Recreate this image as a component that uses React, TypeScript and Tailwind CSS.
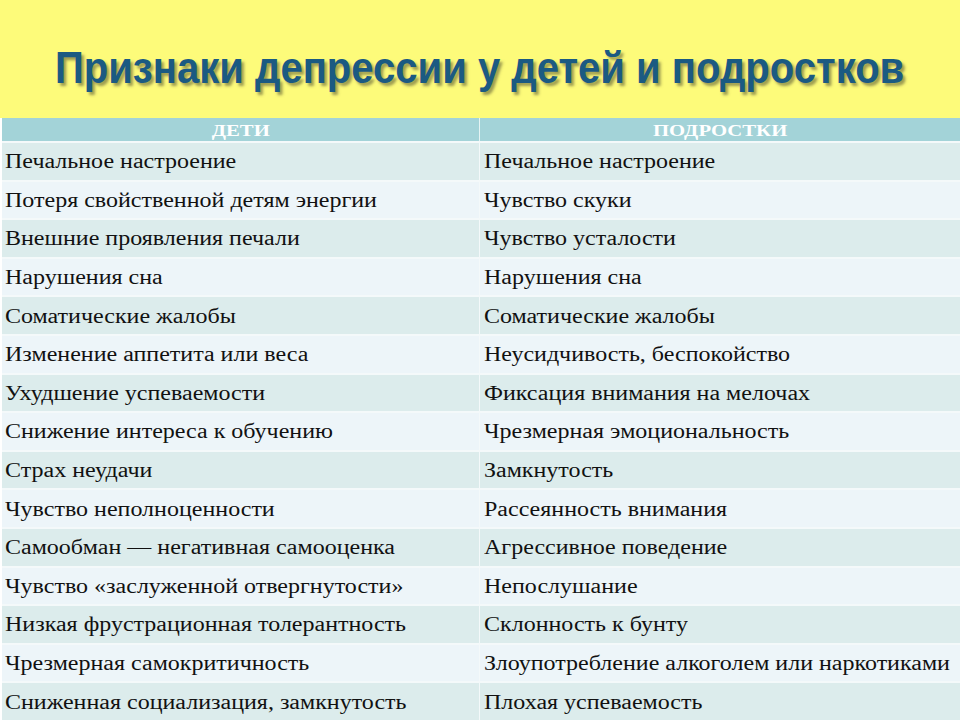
import React from "react";

const rows: [string, string][] = [
  ["Печальное настроение", "Печальное настроение"],
  ["Потеря свойственной детям энергии", "Чувство скуки"],
  ["Внешние проявления печали", "Чувство усталости"],
  ["Нарушения сна", "Нарушения сна"],
  ["Соматические жалобы", "Соматические жалобы"],
  ["Изменение аппетита или веса", "Неусидчивость, беспокойство"],
  ["Ухудшение успеваемости", "Фиксация внимания на мелочах"],
  ["Снижение интереса к обучению", "Чрезмерная эмоциональность"],
  ["Страх неудачи", "Замкнутость"],
  ["Чувство неполноценности", "Рассеянность внимания"],
  ["Самообман — негативная самооценка", "Агрессивное поведение"],
  ["Чувство «заслуженной отвергнутости»", "Непослушание"],
  ["Низкая фрустрационная толерантность", "Склонность к бунту"],
  ["Чрезмерная самокритичность", "Злоупотребление алкоголем или наркотиками"],
  ["Сниженная социализация, замкнутость", "Плохая успеваемость"],
];

export default function App() {
  return (
    <div className="w-[960px] h-[720px] overflow-hidden bg-[#fdfb7a] flex flex-col">
      <div className="h-[118px] flex items-center justify-center pt-[18px]">
        <h1
          className="text-[44px] font-bold text-[#1b5a82] scale-x-[0.91] whitespace-nowrap"
          style={{
            fontFamily: "'Liberation Sans', Arial, sans-serif",
            textShadow: "3px 3px 3px rgba(60,60,40,0.5)",
          }}
        >
          Признаки депрессии у детей и подростков
        </h1>
      </div>
      <div
        className="flex-1 flex flex-col bg-white pl-[2px]"
        style={{ fontFamily: "'Liberation Serif', 'Times New Roman', serif" }}
      >
        <div className="h-[23px] grid grid-cols-[478px_1fr] bg-[#a3d3d8]">
          <div className="flex items-center justify-center text-white font-bold text-[17px] leading-none border-r border-[#e6f4f4]">
            <span className="inline-block scale-x-[1.22] pt-[2px]">ДЕТИ</span>
          </div>
          <div className="flex items-center justify-center text-white font-bold text-[17px] leading-none">
            <span className="inline-block scale-x-[1.22] pt-[2px]">ПОДРОСТКИ</span>
          </div>
        </div>
        {rows.map(([a, b], i) => (
          <div
            key={i}
            className={`h-[38.6px] shrink-0 grid grid-cols-[478px_1fr] border-t-2 border-[#f4f9fa] ${
              i % 2 === 0 ? "bg-[#dcecec]" : "bg-[#edf5f9]"
            }`}
          >
            <div className="flex items-center pl-[3px] text-[20px] text-[#111] whitespace-nowrap border-r border-[#f4f9fa] overflow-visible">
              <span className="inline-block scale-x-[1.2] origin-left">{a}</span>
            </div>
            <div className="flex items-center pl-[4px] text-[20px] text-[#111] whitespace-nowrap overflow-visible">
              <span className="inline-block scale-x-[1.2] origin-left">{b}</span>
            </div>
          </div>
        ))}
      </div>
    </div>
  );
}
